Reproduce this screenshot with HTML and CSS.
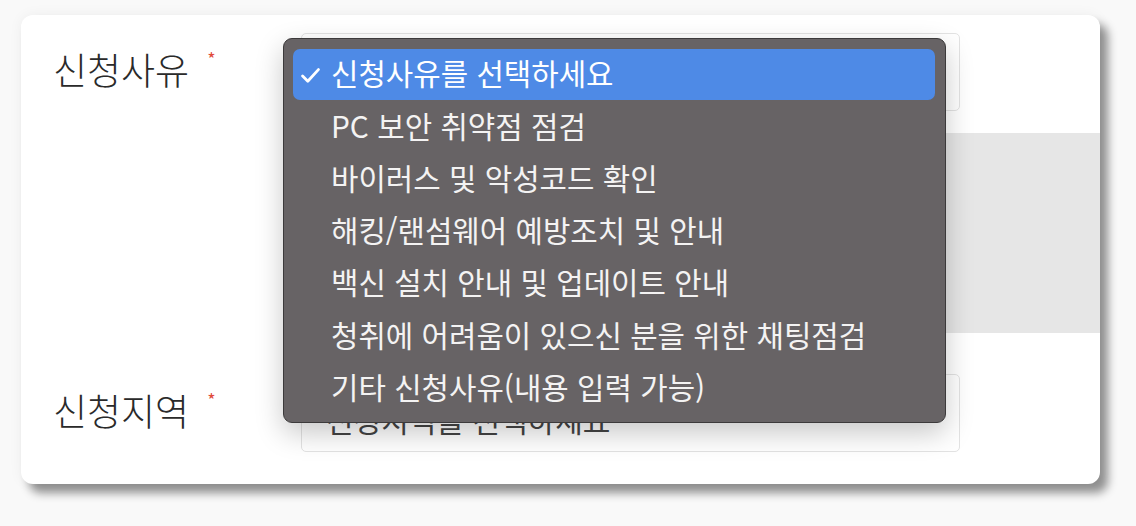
FILE: index.html
```html
<!DOCTYPE html>
<html lang="ko">
<head>
<meta charset="utf-8">
<link rel="stylesheet" href="styles.css">
</head>
<body>
<div class="card">
  <div class="row">
    <div class="label">신청사유<span class="req">*</span></div>
    <div class="field"></div>
  </div>
  <div class="panel"></div>
  <div class="row row-region">
    <div class="label">신청지역<span class="req">*</span></div>
    <div class="field"><span class="placeholder">신청지역을 선택하세요</span></div>
  </div>

  <ul class="menu">
    <li class="item selected"><svg class="check" viewBox="0 0 19 15" width="19" height="15"><polyline points="1.6,8 6.8,13.2 17.4,1.6" fill="none" stroke="#fff" stroke-width="2.8" stroke-linecap="round" stroke-linejoin="round"/></svg>신청사유를 선택하세요</li>
    <li class="item">PC 보안 취약점 점검</li>
    <li class="item">바이러스 및 악성코드 확인</li>
    <li class="item">해킹/랜섬웨어 예방조치 및 안내</li>
    <li class="item">백신 설치 안내 및 업데이트 안내</li>
    <li class="item">청취에 어려움이 있으신 분을 위한 채팅점검</li>
    <li class="item">기타 신청사유(내용 입력 가능)</li>
  </ul>
</div>
</body>
</html>
```

FILE: styles.css
```css
* { box-sizing: border-box; }
html, body { margin: 0; padding: 0; }
body {
  width: 1136px;
  height: 526px;
  background: #f9f9f9;
  font-family: "Noto Sans CJK KR", "Noto Sans", sans-serif;
  overflow: hidden;
  padding: 15px 0 0 21px;
}
.card {
  position: relative;
  width: 1079px;
  height: 469px;
  background: #ffffff;
  border-radius: 12px;
  box-shadow: 8px 9px 10px rgba(0,0,0,0.42), 0 0 14px rgba(0,0,0,0.05);
  padding: 18px 0 0 32px;
}
.row {
  display: flex;
  align-items: center;
  height: 78px;
}
.label {
  width: 248px;
  font-size: 37px;
  font-weight: 300;
  color: #2a2a2a;
  line-height: 1;
  display: flex;
  align-items: flex-start;
  margin-top: -5px;
}
.req {
  color: #e0493a;
  font-size: 18px;
  margin-left: 18px;
  margin-top: -2px;
  font-weight: 400;
}
.field {
  width: 659px;
  height: 78px;
  border: 1px solid #e3e3e3;
  border-radius: 5px;
  background: #fff;
  display: flex;
  align-items: center;
  padding-left: 24px;
}
.placeholder {
  font-size: 30px;
  color: #444;
  margin-top: 12px;
}
.panel {
  margin: 22px 0 0 248px;
  height: 200px;
  background: #e6e6e6;
}
.row-region { margin-top: 41px; }
.menu {
  position: absolute;
  left: 262px;
  top: 23px;
  width: 663px;
  height: 385px;
  margin: 0;
  padding: 10px 10px 9px 9px;
  list-style: none;
  background: #676365;
  border: 1px solid #3c3a3b;
  border-radius: 9px;
  box-shadow: 0 10px 28px rgba(0,0,0,0.22);
}
.item {
  position: relative;
  height: 52.3px;
  display: flex;
  align-items: center;
  padding: 0 0 4px 38px;
  font-size: 29.8px;
  color: #f4f3f3;
  line-height: 1;
  white-space: nowrap;
}
.item.selected {
  height: 51px;
  margin-bottom: 1.3px;
  background: #4e8ae6;
  border-radius: 7px;
  color: #fff;
}
.check {
  position: absolute;
  left: 8px;
  top: 19px;
}
```
